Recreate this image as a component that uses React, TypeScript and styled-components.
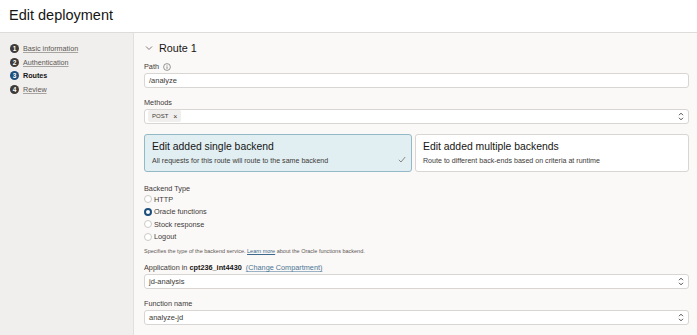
import React from "react";
import styled, { createGlobalStyle } from "styled-components";

const Global = createGlobalStyle`
  html, body { margin: 0; padding: 0; background: #fff; }
  body { font-family: "Liberation Sans", Arial, sans-serif; color: #161513; }
  * { box-sizing: border-box; }
`;

const Page = styled.div`
  width: 697px;
  height: 335px;
  display: flex;
  flex-direction: column;
  overflow: hidden;
`;

const Header = styled.div`
  height: 33px;
  flex: none;
  display: flex;
  align-items: center;
  padding-left: 9px;
  border-bottom: 1px solid #dedcda;
  background: #fff;
`;

const Title = styled.h1`
  margin: 0;
  font-size: 14.5px;
  font-weight: 400;
  color: #161513;
  position: relative;
  top: -1px;
`;

const Body = styled.div`
  flex: 1;
  display: flex;
  min-height: 0;
`;

const Sidebar = styled.div`
  width: 134px;
  flex: none;
  background: #f1efed;
  border-right: 1px solid #e2e0de;
  padding: 11px 0 0 10px;
  display: flex;
  flex-direction: column;
  gap: 4px;
`;

const Step = styled.div`
  display: flex;
  align-items: center;
  gap: 4px;
  height: 9.5px;
`;

const StepNum = styled.span<{ $active?: boolean }>`
  width: 9px;
  height: 9px;
  border-radius: 50%;
  background: ${(p) => (p.$active ? "#1d4f7c" : "#3d3a37")};
  color: #fff;
  font-size: 6.5px;
  font-weight: 700;
  display: flex;
  align-items: center;
  justify-content: center;
  flex: none;
`;

const StepLabel = styled.span<{ $active?: boolean }>`
  font-size: 7.2px;
  color: ${(p) => (p.$active ? "#161513" : "#5b5854")};
  font-weight: ${(p) => (p.$active ? 700 : 400)};
  text-decoration: ${(p) => (p.$active ? "none" : "underline")};
  text-decoration-color: #a8a5a1;
`;

const Main = styled.div`
  flex: 1;
  background: #fbf9f8;
  padding: 9px 8px 0 10px;
  display: flex;
  flex-direction: column;
`;

const RouteHead = styled.div`
  display: flex;
  align-items: center;
  gap: 6px;
  padding-left: 1px;
  height: 16px;
  margin-bottom: 8px;
`;

const RouteTitle = styled.span`
  font-size: 10.8px;
  color: #161513;
`;

const Label = styled.div`
  font-size: 7.3px;
  color: #3d3a37;
  display: flex;
  align-items: center;
  gap: 4px;
  height: 10px;
  margin-bottom: 2px;
`;

const Field = styled.div<{ $mb?: number }>`
  height: 19px;
  border: 1px solid #d8d5d2;
  border-radius: 3px;
  background: #fff;
  display: flex;
  align-items: center;
  padding: 0 4px;
  font-size: 7.5px;
  color: #3d3a37;
  margin-bottom: ${(p) => p.$mb ?? 10}px;
  justify-content: space-between;
`;

const Chip = styled.span`
  background: #f1efed;
  border-radius: 2px;
  padding: 0 4px;
  height: 12px;
  display: inline-flex;
  align-items: center;
  gap: 5px;
  font-size: 6px;
  color: #3d3a37;
  margin-left: -1px;
`;

const Cards = styled.div`
  display: flex;
  gap: 3px;
  margin-bottom: 12px;
`;

const Card = styled.div<{ $selected?: boolean; $w: number }>`
  width: ${(p) => p.$w}px;
  height: 38px;
  border: 1px solid ${(p) => (p.$selected ? "#93b9c6" : "#d8d5d2")};
  background: ${(p) => (p.$selected ? "#e1eff3" : "#fff")};
  border-radius: 3px;
  padding: 6px 7px 0 7px;
  position: relative;
`;

const CardTitle = styled.div`
  font-size: 10.4px;
  color: #161513;
  margin-bottom: 5px;
`;

const CardSub = styled.div`
  font-size: 7.1px;
  color: #3d3a37;
`;

const Check = styled.svg`
  position: absolute;
  right: 5px;
  bottom: 8px;
`;

const RadioGroup = styled.div`
  display: flex;
  flex-direction: column;
  gap: 3.5px;
  margin-bottom: 7px;
`;

const RadioRow = styled.div`
  display: flex;
  align-items: center;
  gap: 2px;
  height: 9px;
  font-size: 7.3px;
  color: #3d3a37;
`;

const Radio = styled.span<{ $on?: boolean }>`
  width: 8px;
  height: 8px;
  border-radius: 50%;
  flex: none;
  background: #fff;
  border: ${(p) => (p.$on ? "2.3px solid #1d4f7c" : "1px solid #cdcac6")};
`;

const Help = styled.div`
  font-size: 5.5px;
  color: #5b5854;
  margin-bottom: 9px;
`;

const HelpLink = styled.span`
  text-decoration: underline;
  color: #3d6a8a;
`;

const Bold = styled.b`
  font-weight: 700;
  color: #161513;
`;

const Link = styled.span`
  color: #4a7593;
  text-decoration: underline;
  text-decoration-color: #9bb3c4;
  margin-left: 4px;
`;

const Chevron = () => (
  <svg width="8" height="6" viewBox="0 0 8 6">
    <path d="M1 1.5 L4 4.5 L7 1.5" fill="none" stroke="#6f6c69" strokeWidth="0.9" />
  </svg>
);

const Info = () => (
  <svg width="8" height="8" viewBox="0 0 8 8">
    <circle cx="4" cy="4" r="3.4" fill="none" stroke="#6f6c69" strokeWidth="0.7" />
    <path d="M4 3.4 V5.8" stroke="#6f6c69" strokeWidth="0.8" />
    <circle cx="4" cy="2.3" r="0.45" fill="#6f6c69" />
  </svg>
);

const UpDown = () => (
  <svg width="6" height="9" viewBox="0 0 6 9">
    <path d="M1 3.2 L3 1.2 L5 3.2 M1 5.8 L3 7.8 L5 5.8" fill="none" stroke="#3d3a37" strokeWidth="0.9" />
  </svg>
);

const steps = [
  { n: 1, label: "Basic information" },
  { n: 2, label: "Authentication" },
  { n: 3, label: "Routes", active: true },
  { n: 4, label: "Review" },
];

export default function App() {
  return (
    <Page>
      <Global />
      <Header>
        <Title>Edit deployment</Title>
      </Header>
      <Body>
        <Sidebar>
          {steps.map((s) => (
            <Step key={s.n}>
              <StepNum $active={s.active}>{s.n}</StepNum>
              <StepLabel $active={s.active}>{s.label}</StepLabel>
            </Step>
          ))}
        </Sidebar>
        <Main>
          <RouteHead>
            <Chevron />
            <RouteTitle>Route 1</RouteTitle>
          </RouteHead>
          <Label>
            Path <Info />
          </Label>
          <Field>/analyze</Field>
          <Label>Methods</Label>
          <Field>
            <Chip>
              POST <span style={{ fontSize: "7px" }}>×</span>
            </Chip>
            <UpDown />
          </Field>
          <Cards>
            <Card $selected $w={268}>
              <CardTitle>Edit added single backend</CardTitle>
              <CardSub>All requests for this route will route to the same backend</CardSub>
              <Check width="8" height="7" viewBox="0 0 8 7">
                <path d="M0.8 3.8 L3 6 L7.2 1" fill="none" stroke="#6f6c69" strokeWidth="0.8" />
              </Check>
            </Card>
            <Card $w={274}>
              <CardTitle>Edit added multiple backends</CardTitle>
              <CardSub>Route to different back-ends based on criteria at runtime</CardSub>
            </Card>
          </Cards>
          <Label>Backend Type</Label>
          <RadioGroup>
            <RadioRow>
              <Radio /> HTTP
            </RadioRow>
            <RadioRow>
              <Radio $on /> Oracle functions
            </RadioRow>
            <RadioRow>
              <Radio /> Stock response
            </RadioRow>
            <RadioRow>
              <Radio /> Logout
            </RadioRow>
          </RadioGroup>
          <Help>
            Specifies the type of the backend service. <HelpLink>Learn more</HelpLink> about the Oracle functions backend.
          </Help>
          <Label>
            <span>
              Application in <Bold>cpt236_int4430</Bold>
              <Link>(Change Compartment)</Link>
            </span>
          </Label>
          <Field>
            jd-analysis
            <UpDown />
          </Field>
          <Label>Function name</Label>
          <Field>
            analyze-jd
            <UpDown />
          </Field>
        </Main>
      </Body>
    </Page>
  );
}
